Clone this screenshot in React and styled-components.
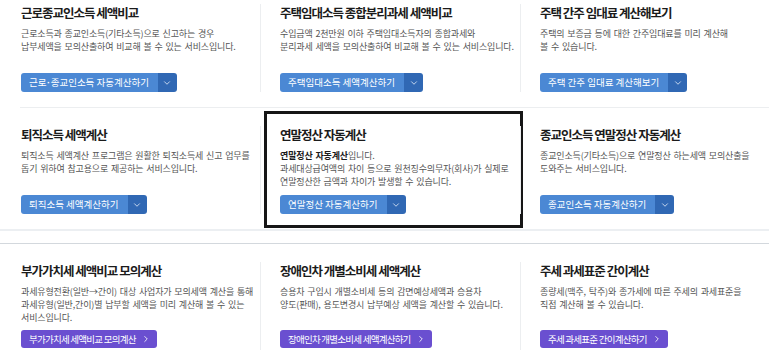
import styled, { createGlobalStyle } from 'styled-components';
import { ChevronDown, ChevronRight } from 'lucide-react';

const GlobalStyle = createGlobalStyle`
  html, body {
    margin: 0;
    padding: 0;
    background: #ffffff;
    overflow: hidden;
  }
  body {
    font-family: "Noto Sans CJK KR", "Noto Sans", sans-serif;
    color: #222;
  }
`;

const Page = styled.div`
  width: 769px;
  height: 357px;
  overflow: hidden;
`;

// 위쪽이 잘린 화면이라 전체를 살짝 올려 둠
const Scroller = styled.div`
  margin-top: -14px;
`;

const Section = styled.section`
  border-top: ${(p) => (p.$topLine ? '1px solid #d3d8dd' : 'none')};
  border-bottom: ${(p) => (p.$bottomLine ? '2px solid #eceff2' : 'none')};
  margin-top: ${(p) => (p.$topLine ? '12px' : '0')};
`;

const Row = styled.div`
  display: grid;
  grid-template-columns: 240px 260px 1fr;
  margin-left: 20px;
  border-bottom: ${(p) => (p.$divider ? '1px solid #eceef0' : 'none')};
`;

const Cell = styled.div`
  position: relative;
  padding: 18px 0 15px;

  ${(p) =>
    p.$highlight &&
    `
    &::after {
      content: '';
      position: absolute;
      top: 3px;
      left: 4px;
      right: -3px;
      bottom: 1px;
      border: 3px solid #161616;
      pointer-events: none;
    }
  `}
`;

const Inner = styled.div`
  display: flex;
  flex-direction: column;
  height: 88px;
  box-sizing: border-box;
  border-left: 1px solid ${(p) => (p.$first ? 'transparent' : '#eceef0')};
  padding-left: ${(p) => (p.$first ? '0' : '19px')};
`;

const Title = styled.h3`
  margin: 0;
  font-size: 12.5px;
  line-height: 17px;
  font-weight: 700;
  letter-spacing: -1px;
  color: #1b1b1b;
  white-space: nowrap;
`;

const Desc = styled.div`
  margin-top: 6px;
  font-size: 9px;
  letter-spacing: -0.15px;
  word-spacing: 1px;
  color: #555;
  white-space: nowrap;

  b {
    color: #1b1b1b;
    font-weight: 700;
  }
`;

const Line = styled.div`
  height: 13px;
  line-height: 13px;
`;

const Split = styled.div`
  margin-top: auto;
  display: inline-flex;
  align-self: flex-start;
  height: 19px;
  border-radius: 3px;
  overflow: hidden;
`;

const MainBtn = styled.button`
  border: none;
  margin: 0;
  padding: 0 9px 0 8px;
  background: #4b88d4;
  color: #fff;
  font-family: inherit;
  font-size: 9.5px;
  letter-spacing: 0;
  line-height: 19px;
  white-space: nowrap;
  cursor: pointer;
`;

const Dot = styled.span`
  font-family: "Liberation Sans", sans-serif;
  font-weight: 700;
  margin: 0 0.5px;
`;

const DropBtn = styled.button`
  border: none;
  margin: 0;
  padding: 0;
  width: 19px;
  display: flex;
  align-items: center;
  justify-content: center;
  background: #3068b4;
  color: #dfe9f7;
  cursor: pointer;
`;

const PurpleBtn = styled.button`
  margin-top: auto;
  margin-bottom: 2px;
  align-self: flex-start;
  display: inline-flex;
  align-items: center;
  gap: 5px;
  height: 18px;
  border: none;
  border-radius: 3px;
  padding: 0 6px 0 8px;
  background: #6a4fd0;
  color: #fff;
  font-family: inherit;
  font-size: 9.5px;
  letter-spacing: -0.75px;
  white-space: nowrap;
  cursor: pointer;
`;

const rows = [
  [
    {
      title: '근로종교인소득 세액비교',
      lines: ['근로소득과 종교인소득(기타소득)으로 신고하는 경우', '납부세액을 모의산출하여 비교해 볼 수 있는 서비스입니다.'],
      button: <>근로<Dot>·</Dot>종교인소득 자동계산하기</>,
    },
    {
      title: '주택임대소득 종합분리과세 세액비교',
      lines: ['수입금액 2천만원 이하 주택임대소득자의 종합과세와', '분리과세 세액을 모의산출하여 비교해 볼 수 있는 서비스입니다.'],
      button: '주택임대소득 세액계산하기',
    },
    {
      title: '주택 간주 임대료 계산해보기',
      lines: ['주택의 보증금 등에 대한 간주임대료를 미리 계산해', '볼 수 있습니다.'],
      button: '주택 간주 임대료 계산해보기',
    },
  ],
  [
    {
      title: '퇴직소득 세액계산',
      lines: ['퇴직소득 세액계산 프로그램은 원활한 퇴직소득세 신고 업무를', '돕기 위하여 참고용으로 제공하는 서비스입니다.'],
      button: '퇴직소득 세액계산하기',
    },
    {
      title: '연말정산 자동계산',
      lines: [
        <><b>연말정산 자동계산</b>입니다.</>,
        '과세대상급여액의 차이 등으로 원천징수의무자(회사)가 실제로',
        '연말정산한 금액과 차이가 발생할 수 있습니다.',
      ],
      button: '연말정산 자동계산하기',
      highlight: true,
    },
    {
      title: '종교인소득 연말정산 자동계산',
      lines: ['종교인소득(기타소득)으로 연말정산 하는세액 모의산출을', '도와주는 서비스입니다.'],
      button: '종교인소득 자동계산하기',
    },
  ],
];

const vatRow = [
  {
    title: '부가가치세 세액비교 모의계산',
    lines: [
      '과세유형전환(일반→간이) 대상 사업자가 모의세액 계산을 통해',
      '과세유형(일반,간이)별 납부할 세액을 미리 계산해 볼 수 있는',
      '서비스입니다.',
    ],
    button: '부가가치세 세액비교 모의계산',
  },
  {
    title: '장애인차 개별소비세 세액계산',
    lines: ['승용차 구입시 개별소비세 등의 감면예상세액과 승용차', '양도(판매), 용도변경시 납부예상 세액을 계산할 수 있습니다.'],
    button: '장애인차 개별소비세 세액계산하기',
  },
  {
    title: '주세 과세표준 간이계산',
    lines: ['종량세(맥주, 탁주)와 종가세에 따른 주세의 과세표준을', '직접 계산해 볼 수 있습니다.'],
    button: '주세 과세표준 간이계산하기',
  },
];

const Card = ({ item, index, purple }) => (
  <Cell $highlight={item.highlight}>
    <Inner $first={index === 0}>
      <Title>{item.title}</Title>
      <Desc>
        {item.lines.map((line, i) => (
          <Line key={i}>{line}</Line>
        ))}
      </Desc>
      {purple ? (
        <PurpleBtn>
          {item.button}
          <ChevronRight size={10} strokeWidth={2} />
        </PurpleBtn>
      ) : (
        <Split>
          <MainBtn>{item.button}</MainBtn>
          <DropBtn>
            <ChevronDown size={10} strokeWidth={2} />
          </DropBtn>
        </Split>
      )}
    </Inner>
  </Cell>
);

const App = () => {
  return (
    <Page>
      <GlobalStyle />
      <Scroller>
        <Section $bottomLine>
          {rows.map((row, r) => (
            <Row key={r} $divider={r === 0}>
              {row.map((item, i) => (
                <Card key={i} item={item} index={i} />
              ))}
            </Row>
          ))}
        </Section>
        <Section $topLine>
          <Row>
            {vatRow.map((item, i) => (
              <Card key={i} item={item} index={i} purple />
            ))}
          </Row>
        </Section>
      </Scroller>
    </Page>
  );
};

export default App;
